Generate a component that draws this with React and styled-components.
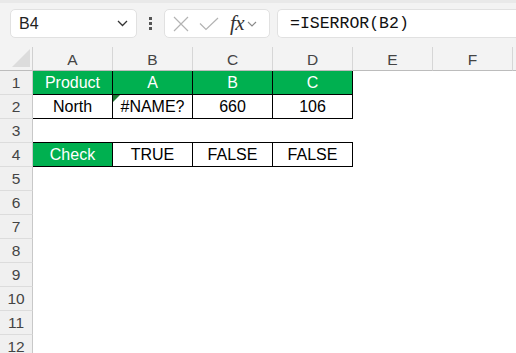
import styled, { createGlobalStyle } from 'styled-components'

const GlobalStyle = createGlobalStyle`
  html, body {
    margin: 0;
    padding: 0;
    background: #ffffff;
    overflow: hidden;
  }
  body {
    font-family: 'Liberation Sans', Arial, sans-serif;
  }
`

const COLS = ['A', 'B', 'C', 'D', 'E', 'F']
const ROWS = [1, 2, 3, 4, 5, 6, 7, 8, 9, 10, 11, 12]

// cell content per row, by column
const DATA = {
  1: [
    { text: 'Product', fill: true },
    { text: 'A', fill: true },
    { text: 'B', fill: true },
    { text: 'C', fill: true }
  ],
  2: [
    { text: 'North' },
    { text: '#NAME?', flag: true },
    { text: '660' },
    { text: '106' }
  ],
  4: [
    { text: 'Check', fill: true, top: true },
    { text: 'TRUE', top: true },
    { text: 'FALSE', top: true },
    { text: 'FALSE', top: true }
  ]
}

export default function App() {
  return (
    <Page>
      <GlobalStyle />

      {/* formula bar */}
      <Toolbar>
        <NameBox>
          <span>B4</span>
          <svg width="11" height="7" viewBox="0 0 11 7">
            <path d="M1 1l4.5 4.5L10 1" fill="none" stroke="#333" strokeWidth="1.3" />
          </svg>
        </NameBox>
        <Dots>
          <i />
          <i />
          <i />
        </Dots>
        <ButtonBox>
          <svg width="16" height="16" viewBox="0 0 16 16">
            <path d="M1 1l14 14M15 1L1 15" stroke="#b3b3b3" strokeWidth="1.2" />
          </svg>
          <svg width="20" height="14" viewBox="0 0 20 14">
            <path d="M1 6.5l6 6L19 1" fill="none" stroke="#b3b3b3" strokeWidth="1.2" />
          </svg>
          <Fx>fx</Fx>
          <svg width="10" height="6" viewBox="0 0 10 6">
            <path d="M1 1l4 4 4-4" fill="none" stroke="#888" strokeWidth="1.1" />
          </svg>
        </ButtonBox>
        <FormulaInput>=ISERROR(B2)</FormulaInput>
      </Toolbar>

      {/* sheet */}
      <Sheet>
        <Corner>
          <svg width="18" height="18" viewBox="0 0 18 18">
            <path d="M18 0V18H0z" fill="#dcdcdc" />
          </svg>
        </Corner>
        {COLS.map((c) => (
          <ColHeader key={c}>{c}</ColHeader>
        ))}
        <ColHeader $last />

        {ROWS.map((r) => (
          <Row key={r} r={r} />
        ))}
      </Sheet>
    </Page>
  )
}

function Row({ r }) {
  const cells = DATA[r] || []
  return (
    <>
      <RowHeader>{r}</RowHeader>
      {COLS.map((c, i) => {
        const cell = cells[i]
        if (!cell) return <Cell key={c} />
        return (
          <Cell key={c} $fill={cell.fill} $boxed $top={cell.top}>
            {cell.flag && <Flag />}
            {cell.text}
          </Cell>
        )
      })}
      <Cell />
    </>
  )
}

const Page = styled.div`
  width: 516px;
  height: 353px;
  overflow: hidden;
  background: #ffffff;
`

const Toolbar = styled.div`
  display: flex;
  align-items: flex-start;
  height: 47px;
  padding: 6px 0 0 10px;
  box-sizing: border-box;
  background: #f3f3f3;
  border-top: 3px solid #e9e9e9;
`

const Box = styled.div`
  display: flex;
  align-items: center;
  height: 29px;
  box-sizing: border-box;
  background: #ffffff;
  border: 1px solid #e1e1e1;
  border-radius: 5px;
`

const NameBox = styled(Box)`
  width: 127px;
  padding: 0 8px;
  justify-content: space-between;
  font-size: 16px;
  color: #222;
`

const Dots = styled.div`
  display: flex;
  flex-direction: column;
  gap: 2px;
  width: 27px;
  height: 29px;
  align-items: center;
  justify-content: center;

  i {
    width: 3px;
    height: 3px;
    background: #555;
    display: block;
  }
`

const ButtonBox = styled(Box)`
  width: 106px;
  padding: 0 0 0 8px;

  svg:nth-child(1) {
    margin-right: 10px;
  }
  svg:nth-child(2) {
    margin-right: 11px;
  }
`

const Fx = styled.span`
  font-family: 'Liberation Serif', 'Times New Roman', serif;
  font-style: italic;
  font-size: 21px;
  color: #333;
  margin-right: 3px;
  letter-spacing: -0.5px;
  line-height: 1;
`

const FormulaInput = styled(Box)`
  flex: 1;
  margin-left: 7px;
  border-right: none;
  border-radius: 5px 0 0 5px;
  padding-left: 12px;
  font-family: 'Liberation Mono', 'Courier New', monospace;
  font-size: 16.5px;
  color: #111;
`

const Sheet = styled.div`
  display: grid;
  grid-template-columns: 33px repeat(6, 80px) 1fr;
  grid-auto-rows: 24px;
`

const Corner = styled.div`
  background: #f3f3f3;
  border-right: 1px solid #d0d0d0;
  border-bottom: 1px solid #bcbcbc;
  box-sizing: border-box;
  display: flex;
  align-items: flex-end;
  justify-content: flex-end;
  padding: 0 2px 3px 0;
`

const ColHeader = styled.div`
  background: #f3f3f3;
  border-right: ${(p) => (p.$last ? 'none' : '1px solid #d6d6d6')};
  border-bottom: 1px solid #bcbcbc;
  box-sizing: border-box;
  display: flex;
  align-items: center;
  justify-content: center;
  color: #444;
  font-size: 15.5px;
  padding-top: 2px;
`

const RowHeader = styled.div`
  background: #f0f0f0;
  border-right: 1px solid #c8c8c8;
  border-bottom: 1px solid #dcdcdc;
  box-sizing: border-box;
  display: flex;
  align-items: center;
  justify-content: center;
  color: #444;
  font-size: 15.5px;
`

const Cell = styled.div`
  position: relative;
  box-sizing: border-box;
  display: flex;
  align-items: center;
  justify-content: center;
  background: ${(p) => (p.$fill ? '#00b050' : '#ffffff')};
  color: ${(p) => (p.$fill ? '#ffffff' : '#000000')};
  border-right: ${(p) => (p.$boxed ? '1px solid #000' : 'none')};
  border-bottom: ${(p) => (p.$boxed ? '1px solid #000' : 'none')};
  border-top: ${(p) => (p.$top ? '1px solid #000' : 'none')};
  margin-top: ${(p) => (p.$top ? '-1px' : '0')};
  height: ${(p) => (p.$top ? '25px' : '24px')};
  font-size: 16px;
`

const Flag = styled.span`
  position: absolute;
  left: 0;
  top: 0;
  width: 0;
  height: 0;
  border-top: 7px solid #1e7b34;
  border-right: 7px solid transparent;
`
